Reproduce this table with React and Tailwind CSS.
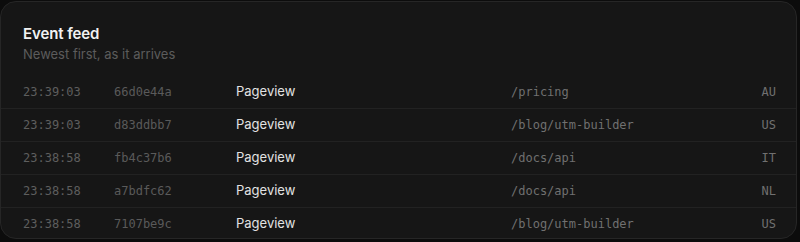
import React from "react";

const rows = [
  ["23:39:03", "66d0e44a", "Pageview", "/pricing", "AU"],
  ["23:39:03", "d83ddbb7", "Pageview", "/blog/utm-builder", "US"],
  ["23:38:58", "fb4c37b6", "Pageview", "/docs/api", "IT"],
  ["23:38:58", "a7bdfc62", "Pageview", "/docs/api", "NL"],
  ["23:38:58", "7107be9c", "Pageview", "/blog/utm-builder", "US"],
];

export default function App() {
  return (
    <div className="w-[800px] h-[242px] bg-[#0c0c0c] pt-px" style={{ fontFamily: "Inter, 'Noto Sans', sans-serif" }}>
      <div className="w-[797px] h-[238px] rounded-[16px] border border-[#262626] bg-[#161616] overflow-hidden">
        <div className="px-[22px] pt-[22px] pb-[12px]">
          <div className="text-[15px] leading-[20px] font-semibold text-[#f2f2f2] tracking-[-0.1px]">Event feed</div>
          <div className="text-[13px] leading-[18px] mt-[1px] text-[#5c5c5c]">Newest first, as it arrives</div>
        </div>
        <div>
          {rows.map((r, i) => (
            <div
              key={i}
              className={`flex items-center h-[33px] pl-[22px] pr-[20px] ${i > 0 ? "border-t border-[#222222]" : ""}`}
            >
              <div className="w-[91px] text-[12px] text-[#5e5e5e]" style={{ fontFamily: "'DejaVu Sans Mono', monospace" }}>{r[0]}</div>
              <div className="w-[122px] text-[12px] text-[#5a5a5a]" style={{ fontFamily: "'DejaVu Sans Mono', monospace" }}>{r[1]}</div>
              <div className="w-[275px] text-[13px] text-[#e2e2e2]">{r[2]}</div>
              <div className="flex-1 text-[12px] text-[#707070]" style={{ fontFamily: "'DejaVu Sans Mono', monospace" }}>{r[3]}</div>
              <div className="text-[12px] text-[#707070] text-right" style={{ fontFamily: "'DejaVu Sans Mono', monospace" }}>{r[4]}</div>
            </div>
          ))}
        </div>
      </div>
    </div>
  );
}
